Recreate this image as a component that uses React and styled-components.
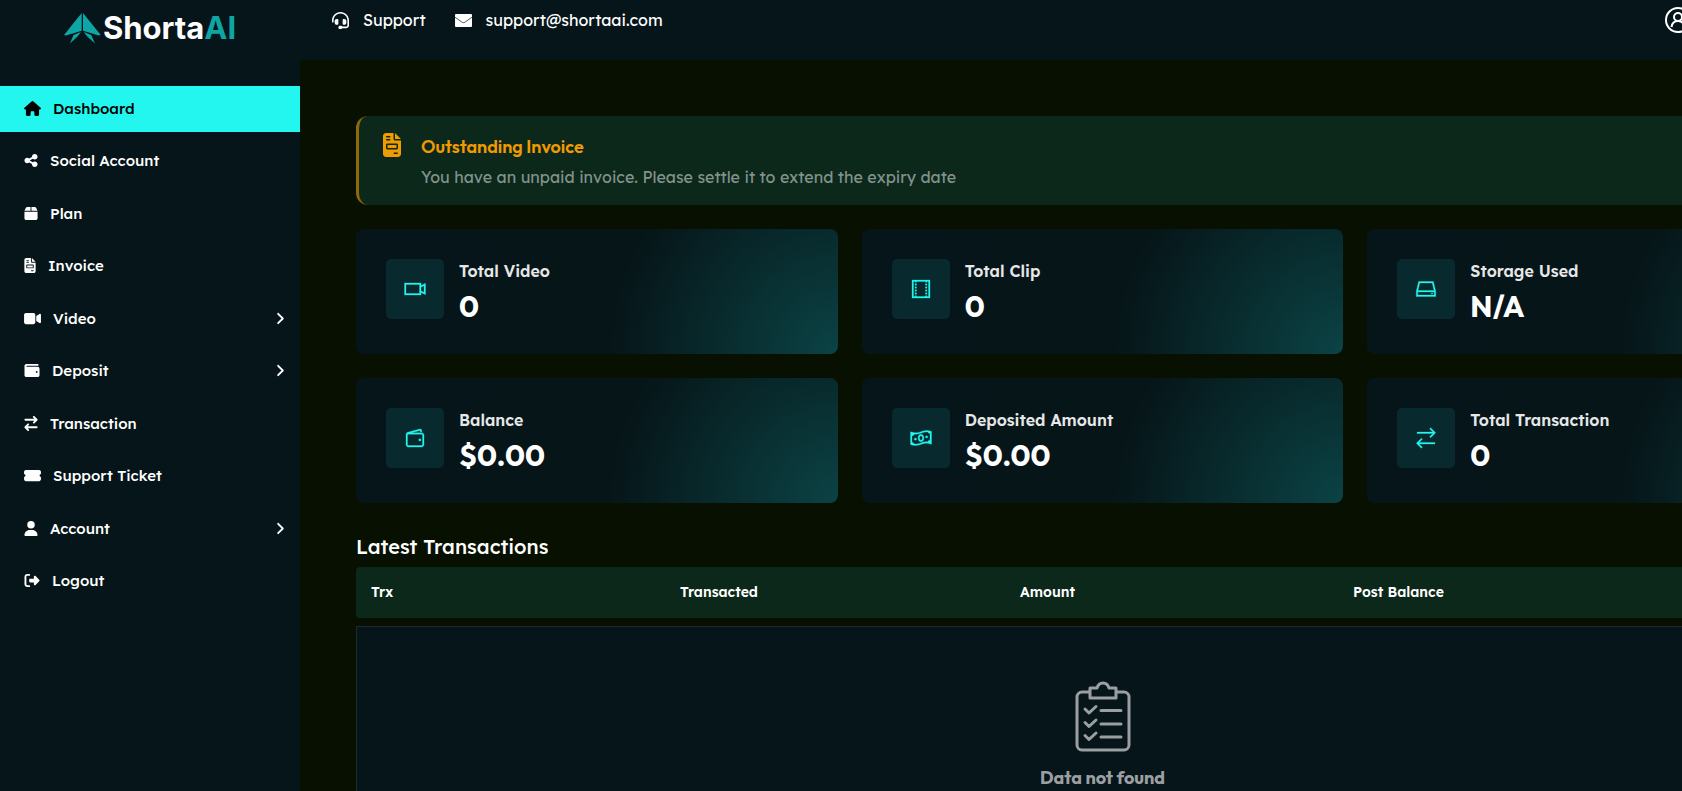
import React from "react";
import styled, { createGlobalStyle } from "styled-components";
import {
  FaHouse,
  FaShareNodes,
  FaBox,
  FaFileInvoice,
  FaVideo,
  FaWallet,
  FaArrowRightArrowLeft,
  FaTicketSimple,
  FaUser,
  FaRightFromBracket,
  FaAngleRight,
  FaHeadset,
} from "react-icons/fa6";
import {
  LiaVideoSolid,
  LiaFilmSolid,
  LiaHddSolid,
  LiaWalletSolid,
  LiaMoneyBillWaveSolid,
  LiaExchangeAltSolid,
} from "react-icons/lia";

const colors = {
  page: "#071001",
  panel: "#061519",
  bar: "#05151a",
  alert: "#0c281b",
  accent: "#22f6ee",
  warning: "#f09b00",
  line: "#1c2931",
};

const headingFont = 'Outfit, Lexend, Inter, "Open Sans", sans-serif';

const GlobalStyle = createGlobalStyle`
  * { box-sizing: border-box; }
  html { background: ${colors.page}; }
  body {
    margin: 0;
    overflow-x: hidden;
    font-family: Lexend, Inter, "Open Sans", sans-serif;
    font-size: 16px;
    color: #fff;
  }
  a { color: inherit; text-decoration: none; }
  button { font: inherit; color: inherit; background: none; border: 0; padding: 0; cursor: pointer; }
  svg { display: block; flex: none; }
`;

const Shell = styled.div`
  display: grid;
  grid-template-columns: 300px 1fr;
  min-width: 1905px;
  min-height: 100vh;
  overflow: hidden;
`;

const Sidebar = styled.aside`
  background: ${colors.panel};
`;

const Logo = styled.a`
  display: flex;
  align-items: center;
  justify-content: center;
  gap: 2px;
  height: 86px;
  padding-bottom: 30px;
`;

const Wordmark = styled.span`
  font-family: Inter, sans-serif;
  font-size: 31px;
  font-weight: 700;
  line-height: 32px;

  em {
    font-style: normal;
    color: #0ea5a5;
  }
`;

const NavList = styled.ul`
  display: flex;
  flex-direction: column;
  justify-content: space-between;
  height: 519px;
  margin: 0;
  padding: 0;
  list-style: none;
`;

const NavLink = styled.a`
  display: flex;
  align-items: center;
  gap: 12px;
  height: 46px;
  padding: 0 15px 2px 24px;
  font-size: 15px;
  font-weight: 500;
  color: ${(p) => (p.$active ? "#000" : "#fff")};
  background: ${(p) => (p.$active ? colors.accent : "transparent")};

  svg {
    width: ${(p) => p.$iconWidth}px;
    height: 15px;
  }
  span + svg {
    width: 10px;
    margin-left: auto;
  }
`;

const Main = styled.main`
  min-width: 0;
`;

const TopBar = styled.header`
  display: flex;
  justify-content: space-between;
  height: 60px;
  padding: 6px 56px 0 32px;
  background: ${colors.bar};
`;

const ContactList = styled.div`
  display: flex;
  gap: 29px;
`;

const ContactLink = styled.a`
  display: flex;
  align-items: center;
  gap: 14px;
  height: 28px;
`;

const UserButton = styled.button`
  display: flex;
  width: 184px;
  height: 28px;
`;

const Content = styled.div`
  padding: 56px 56px 24px;
`;

const Alert = styled.section`
  display: flex;
  align-items: flex-start;
  gap: 20px;
  height: 89px;
  padding: 17px 24px;
  border-left: 3px solid #8f680a;
  border-radius: 12px;
  background: ${colors.alert};

  > svg {
    width: 18px;
    height: 24px;
    color: ${colors.warning};
  }
`;

const AlertTitle = styled.h2`
  margin: 0 0 4px;
  font-family: ${headingFont};
  font-size: 18px;
  font-weight: 600;
  line-height: 28px;
  color: ${colors.warning};
`;

const AlertText = styled.p`
  margin: 0;
  line-height: 24px;
  color: #82928c;
`;

const StatGrid = styled.section`
  display: grid;
  grid-template-columns: repeat(3, 1fr);
  gap: 24px;
  margin: 24px 0 32px;
`;

const StatCard = styled.article`
  display: flex;
  align-items: flex-start;
  gap: 15px;
  padding: 30px;
  height: 125px;
  border-radius: 8px;
  background: radial-gradient(circle at 100% 100%, #0b4345 0%, #061518 46%, ${colors.panel} 100%);
`;

const StatIcon = styled.span`
  display: grid;
  place-items: center;
  width: 58px;
  height: 60px;
  border-radius: 5px;
  font-size: 24px;
  color: ${colors.accent};
  background: #08292d;

  svg {
    stroke: currentColor;
    stroke-width: 0.4px;
  }
`;

const StatLabel = styled.h3`
  margin: 0;
  font-size: 16px;
  font-weight: 600;
  line-height: 24px;
  color: #e6e8e8;
`;

const StatValue = styled.p`
  margin: 4px 0 0;
  font-family: ${headingFont};
  font-size: 30px;
  font-weight: 700;
  line-height: 38px;
`;

const SectionTitle = styled.h2`
  margin: 0;
  font-size: 20px;
  font-weight: 500;
  line-height: 24px;
`;

const Table = styled.table`
  width: 100%;
  table-layout: fixed;
  border-spacing: 0 8px;
`;

const HeadCell = styled.th`
  width: ${(p) => p.$width};
  height: 51px;
  padding: 0 15px 2px;
  text-align: left;
  font-size: 14px;
  font-weight: 600;
  background: ${colors.alert};

  &:first-child { border-radius: 4px 0 0 4px; }
  &:last-child { border-radius: 0 4px 4px 0; }
`;

const EmptyCell = styled.td`
  padding: 54px 16px;
  border: 1px solid ${colors.line};
  background: ${colors.bar};
  font-family: ${headingFont};
  font-size: 18px;
  font-weight: 700;
  line-height: 24px;
  text-align: center;
  color: #9c9fa1;

  svg {
    margin: 0 auto 14px;
  }
`;

function LogoMark() {
  return (
    <svg width="37" height="31" viewBox="0 0 37 31" aria-hidden="true">
      <path fill="#0ea5a5" d="M17.7 0v17.800L2 22.600 0 22zM19 0v17.800l15.700 4.800 2-.6zM17 19 13.500 23.500 6 30.500 9.500 22zM19.700 19 23.200 23.500 31 30.500 27.200 22z" />
    </svg>
  );
}

function MailIcon() {
  return (
    <svg width="17" height="13" viewBox="0 0 17 13" aria-hidden="true">
      <rect width="17" height="13" rx="1" fill="#fff" />
      <path d="M0 3.200 7.200 8.300q1.300.8 2.600 0L17 3.200" fill="none" stroke="#26343a" strokeWidth="0.800" />
    </svg>
  );
}

function UserIcon() {
  return (
    <svg width="28" height="28" viewBox="0 0 28 28" fill="none" stroke="#fff" strokeWidth="2" aria-hidden="true">
      <circle cx="13" cy="14" r="12" />
      <circle cx="13" cy="11" r="4" />
      <path d="M6.500 21c.5-3.500 3-6 6.500-6s6 2.500 6.500 6" />
    </svg>
  );
}

function ChecklistIcon() {
  return (
    <svg width="56" height="71" viewBox="0 0 56 71" fill="none" stroke="#9c9fa1" strokeWidth="3" strokeLinecap="round" strokeLinejoin="round" aria-hidden="true">
      <path d="M14 11H7a5 5 0 0 0-5 5v48a5 5 0 0 0 5 5h42a5 5 0 0 0 5-5V16a5 5 0 0 0-5-5h-7" />
      <path d="M15 7h7c1-3.500 3-5 6-5s5 1.500 6 5h7v10H15z" />
      <path d="m10 28 4 4 7-6.500M10 41.500l4 4 7-6.500M10 54.500l4 4 7-6.500M26 29.500h20M26 43h20M26 56h20" />
    </svg>
  );
}

const navItems = [
  { label: "Dashboard", Icon: FaHouse, iconWidth: 17, active: true },
  { label: "Social Account", Icon: FaShareNodes, iconWidth: 14 },
  { label: "Plan", Icon: FaBox, iconWidth: 14 },
  { label: "Invoice", Icon: FaFileInvoice, iconWidth: 12 },
  { label: "Video", Icon: FaVideo, iconWidth: 17, nested: true },
  { label: "Deposit", Icon: FaWallet, iconWidth: 16, nested: true },
  { label: "Transaction", Icon: FaArrowRightArrowLeft, iconWidth: 14 },
  { label: "Support Ticket", Icon: FaTicketSimple, iconWidth: 17 },
  { label: "Account", Icon: FaUser, iconWidth: 14, nested: true },
  { label: "Logout", Icon: FaRightFromBracket, iconWidth: 16 },
];

const stats = [
  { label: "Total Video", value: "0", Icon: LiaVideoSolid },
  { label: "Total Clip", value: "0", Icon: LiaFilmSolid },
  { label: "Storage Used", value: "N/A", Icon: LiaHddSolid },
  { label: "Balance", value: "$0.00", Icon: LiaWalletSolid },
  { label: "Deposited Amount", value: "$0.00", Icon: LiaMoneyBillWaveSolid },
  { label: "Total Transaction", value: "0", Icon: LiaExchangeAltSolid },
];

const columns = [
  { label: "Trx", width: "309px" },
  { label: "Transacted", width: "340px" },
  { label: "Amount", width: "333px" },
  { label: "Post Balance", width: "auto" },
];

export default function App() {
  return (
    <>
      <GlobalStyle />
      <Shell>
        <Sidebar>
          <Logo href="#">
            <LogoMark />
            <Wordmark>
              Shorta<em>AI</em>
            </Wordmark>
          </Logo>
          <nav>
            <NavList>
              {navItems.map(({ label, Icon, iconWidth, active, nested }) => (
                <li key={label}>
                  <NavLink href="#" $active={active} $iconWidth={iconWidth}>
                    <Icon />
                    <span>{label}</span>
                    {nested && <FaAngleRight />}
                  </NavLink>
                </li>
              ))}
            </NavList>
          </nav>
        </Sidebar>
        <Main>
          <TopBar>
            <ContactList>
              <ContactLink href="#">
                <FaHeadset size={17} />
                Support
              </ContactLink>
              <ContactLink href="mailto:support@shortaai.com">
                <MailIcon />
                support@shortaai.com
              </ContactLink>
            </ContactList>
            <UserButton type="button" aria-label="Account menu">
              <UserIcon />
            </UserButton>
          </TopBar>
          <Content>
            <Alert>
              <FaFileInvoice />
              <div>
                <AlertTitle>Outstanding Invoice</AlertTitle>
                <AlertText>You have an unpaid invoice. Please settle it to extend the expiry date</AlertText>
              </div>
            </Alert>
            <StatGrid>
              {stats.map(({ label, value, Icon }) => (
                <StatCard key={label}>
                  <StatIcon>
                    <Icon />
                  </StatIcon>
                  <div>
                    <StatLabel>{label}</StatLabel>
                    <StatValue>{value}</StatValue>
                  </div>
                </StatCard>
              ))}
            </StatGrid>
            <SectionTitle>Latest Transactions</SectionTitle>
            <Table>
              <thead>
                <tr>
                  {columns.map(({ label, width }) => (
                    <HeadCell key={label} $width={width}>
                      {label}
                    </HeadCell>
                  ))}
                </tr>
              </thead>
              <tbody>
                <tr>
                  <EmptyCell colSpan={columns.length}>
                    <ChecklistIcon />
                    Data not found
                  </EmptyCell>
                </tr>
              </tbody>
            </Table>
          </Content>
        </Main>
      </Shell>
    </>
  );
}
